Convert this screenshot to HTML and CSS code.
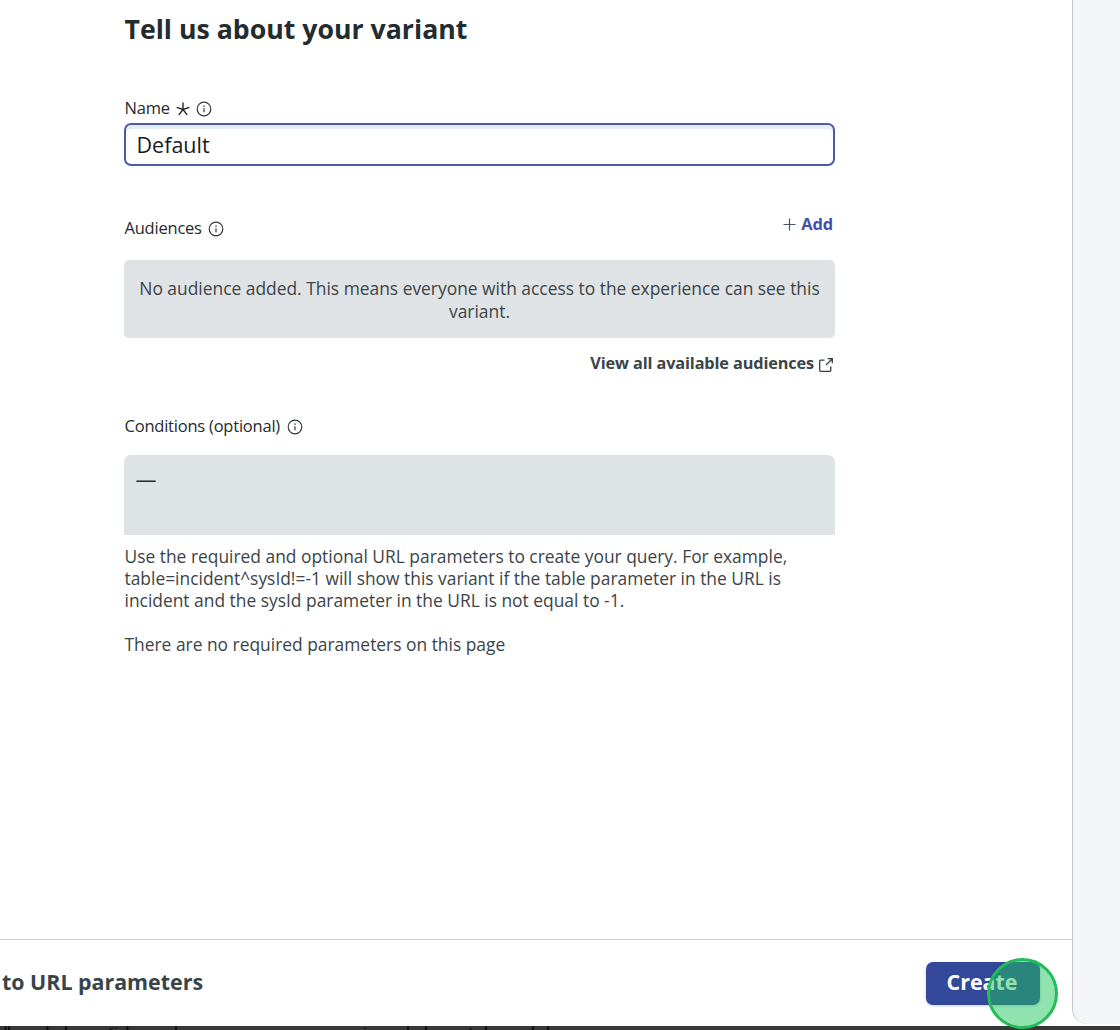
FILE: index.html
```html
<!DOCTYPE html>
<html lang="en">
<head>
<meta charset="utf-8">
<title>Create variant</title>
<link rel="stylesheet" href="styles.css">
</head>
<body>
<div class="app">
  <div class="modal">
    <main class="content">
      <form class="form">
        <h1 class="title"><span>Tell us about your variant</span></h1>
        <label class="label label-name"><span class="label-text">Name</span>
          <svg class="required" viewBox="0 0 14 14"><path d="M7 .5V7.500M.6 5.400 7 7.500l6.400-2.100M2.800 12.900 7 7.500l4.200 5.400"/></svg>
          <svg class="info" viewBox="0 0 16 16"><circle cx="8" cy="8" r="6.8"/><path d="M8 7.2v4"/><path class="dot" d="M8 4.5v1.3"/></svg>
        </label>
        <div class="input"><span>Default</span></div>
        <div class="audience-head">
          <div class="label"><span class="label-text">Audiences</span>
            <svg class="info" viewBox="0 0 16 16"><circle cx="8" cy="8" r="6.8"/><path d="M8 7.2v4"/><path class="dot" d="M8 4.5v1.3"/></svg>
          </div>
          <a class="add"><svg class="plus" viewBox="0 0 13 13"><path d="M6.5.5v12M.5 6.5h12"/></svg><span>Add</span></a>
        </div>
        <div class="empty"><span>No audience added. This means everyone with access to the experience can see this</span><span>variant.</span></div>
        <a class="view-all"><span>View all available audiences</span>
          <svg class="external" viewBox="0 0 14 14"><path d="M5.5 2.2H1.7Q.7 2.2.7 3.2v9.1q0 1 1 1h9.1q1 0 1-1V8.5M8.7.7h4.6v4.6M13.3.7 7 7"/></svg>
        </a>
        <div class="label label-conditions"><span class="label-text">Conditions (optional)</span>
          <svg class="info" viewBox="0 0 16 16"><circle cx="8" cy="8" r="6.8"/><path d="M8 7.2v4"/><path class="dot" d="M8 4.5v1.3"/></svg>
        </div>
        <div class="conditions"><span>—</span></div>
        <p class="help">Use the required and optional URL parameters to create your query. For example,<br>table=incident^sysId!=-1 will show this variant if the table parameter in the URL is<br>incident and the sysId parameter in the URL is not equal to -1.</p>
        <p class="help params">There are no required parameters on this page</p>
      </form>
    </main>
    <footer class="footer">
      <a class="back">to URL parameters</a>
      <div class="create">Create<span class="click-marker"></span></div>
    </footer>
  </div>
  <aside class="side"></aside>
  <svg class="backdrop" viewBox="0 0 1120 4"><path d="M5.5 0v4M9 0v4M47.500 0v4M66 0v4M127.500 0v4M176 0v4M408 0v4M426 0v4M486 0v4M533 0v4M548 0v4"/><path class="faint" d="M109 3h4M116 1v2M365 1v3M469 3h3"/></svg>
</div>
</body>
</html>
```
FILE: styles.css
```css
* { box-sizing: border-box; }
body {
  margin: 0;
  background: #fff;
  color: #3b4448;
  font-family: "Open Sans", "Noto Sans", sans-serif;
}
.app {
  display: grid;
  grid-template: 1026px 4px / 1072px 48px;
  width: 1120px;
  height: 1030px;
  overflow: hidden;
}
.modal { display: flex; flex-direction: column; }
.content { height: 939px; padding: 12px 237px 0 124px; }
.form { display: flex; flex-direction: column; width: 711px; white-space: nowrap; }
.title { margin: 0; height: 34px; padding-left: .5px; font-size: 26.7px; line-height: 34px; font-weight: 700; color: #232c2f; }
.label { display: flex; align-items: center; height: 24px; padding-left: .5px; font-size: 16.5px; letter-spacing: -.22px; color: #252b2d; }
.label-name { margin-top: 49px; }
.required { width: 14px; height: 14px; margin: 3px 0 0 6px; fill: none; stroke: #25292b; stroke-width: 1.4; }
.info { width: 16px; height: 16px; margin: 3px 0 0 6.5px; fill: none; stroke: #33393b; stroke-width: 1.2; }
.info .dot { stroke-width: 1.5; }
.input {
  display: flex;
  align-items: center;
  height: 43px;
  margin-top: 4px;
  padding: 0 11px 1px 10.5px;
  border: 2px solid #4b5aae;
  border-radius: 7px;
  box-shadow: inset 0 4px 0 #e6edf5;
  font-size: 21.5px;
  color: #161b1d;
}
.audience-head { display: flex; justify-content: space-between; height: 44px; margin-top: 50px; }
.audience-head .label { margin-top: -1px; }
.add { display: flex; align-items: center; gap: 5px; height: 14px; padding-right: 2px; font-size: 16.4px; letter-spacing: -.1px; font-weight: 700; color: #4050ae; }
.plus { width: 13px; height: 13px; margin-top: 3px; fill: none; stroke: #4a5264; stroke-width: 1.2; }
.empty {
  display: flex;
  flex-direction: column;
  align-items: center;
  height: 78px;
  padding-top: 17px;
  border-radius: 5px;
  background: #dfe3e6;
  font-size: 17.4px;
  line-height: 23px;
}
.view-all { display: flex; justify-content: flex-end; align-items: center; gap: 5px; height: 24px; margin-top: 13px; padding-right: 2px; font-size: 16.3px; letter-spacing: -.13px; font-weight: 700; }
.external { width: 14px; height: 14px; margin-top: 3px; fill: none; stroke: #353e42; stroke-width: 1.3; }
.label-conditions { margin-top: 38px; }
.conditions { height: 80px; margin-top: 18px; padding: 11px 11.5px; border-radius: 7px 7px 0 0; background: #dee3e6; color: #282d2f; font-size: 21px; line-height: 27px; }
.help { margin: 11.4px 0 0; padding-left: .5px; font-size: 17.4px; line-height: 21.7px; }
.params { margin-top: 22px; }
.footer {
  display: flex;
  align-items: flex-start;
  justify-content: space-between;
  height: 87px;
  padding: 22px 32px 0 2px;
  border-top: 1px solid #c9cccd;
}
.back { height: 42px; font-size: 21.4px; line-height: 40px; font-weight: 700; color: #39444a; }
.create {
  position: relative;
  width: 114px;
  height: 43px;
  padding-right: 2px;
  border-radius: 7px;
  background: #33479b;
  box-shadow: 0 1px 3px #c7cae4;
  color: #fff;
  font-size: 21.4px;
  line-height: 40px;
  font-weight: 700;
  text-align: center;
}
.click-marker {
  position: absolute;
  left: 60.5px;
  top: -4px;
  width: 71px;
  height: 71px;
  border: 3px solid #22bd59;
  border-radius: 50%;
  background: rgba(34, 197, 94, .5);
  z-index: 2;
}
.side { margin-bottom: 2px; border: solid #c5c8ca; border-width: 0 0 0 1px; border-radius: 0 0 0 15px; background: #f4f5f7; }
.backdrop { grid-column: 1 / -1; width: 1120px; height: 4px; background: #383839; fill: none; stroke: #111; stroke-width: 2; }
.faint { stroke: #222; }
```
